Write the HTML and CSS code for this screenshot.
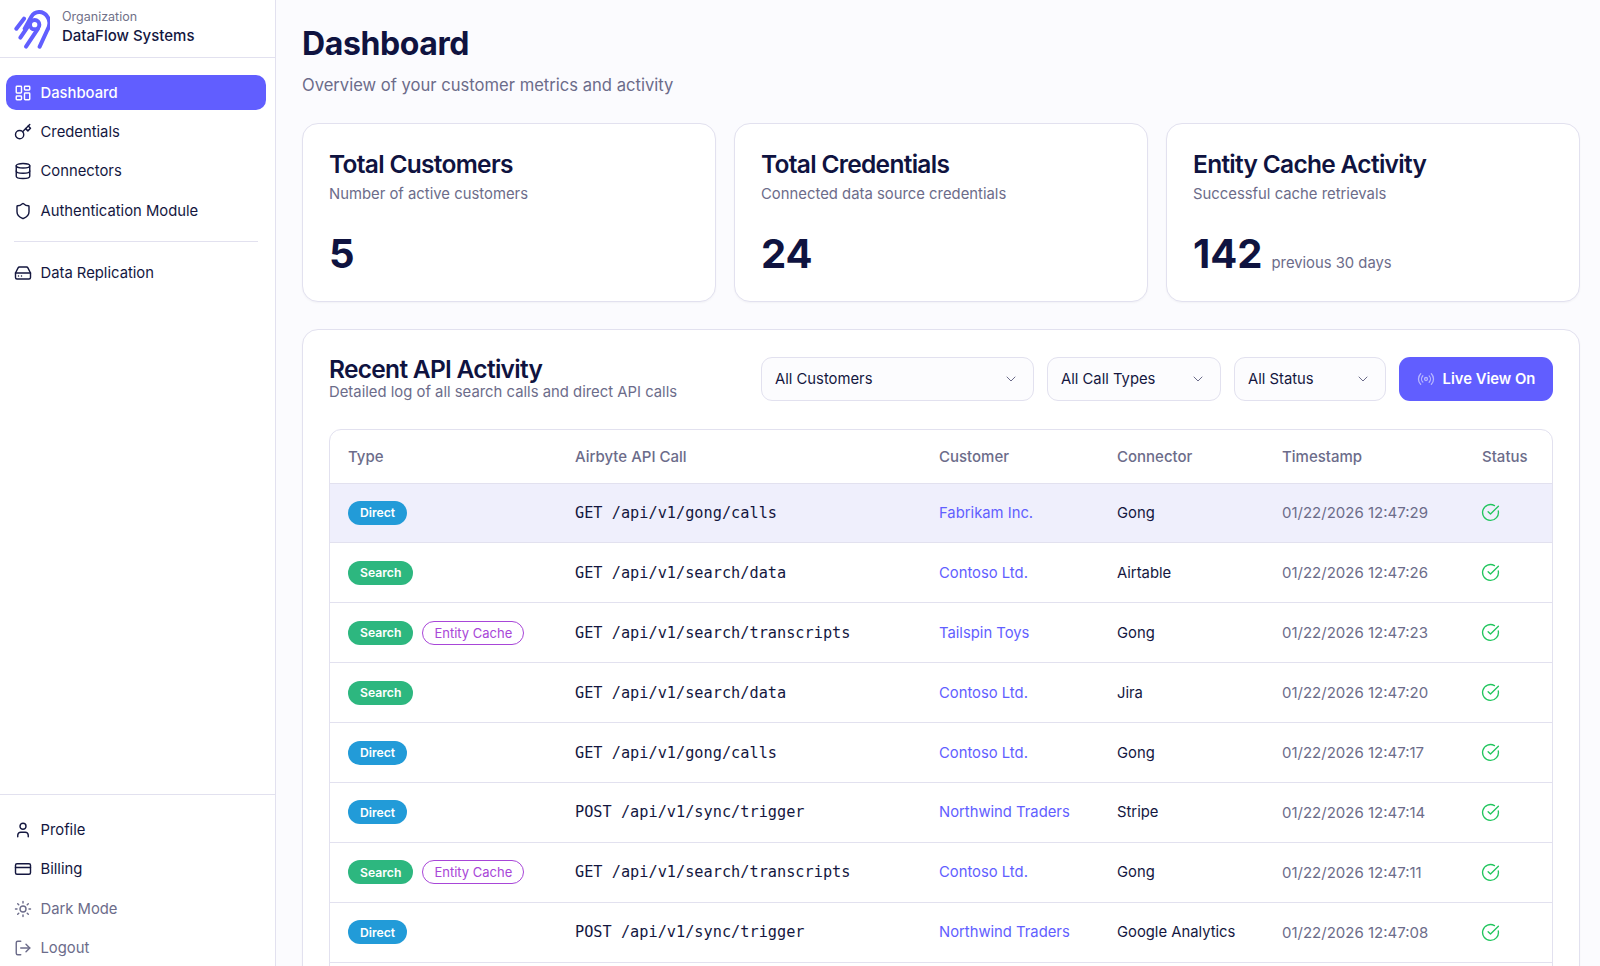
FILE: index.html
```html
<!DOCTYPE html>
<html lang="en">
<head>
<meta charset="utf-8">
<title>Dashboard</title>
<link rel="stylesheet" href="styles.css">
</head>
<body>
<svg class="defs" width="0" height="0" aria-hidden="true">
  <defs>
    <symbol id="i-grid" viewBox="0 0 24 24"><rect x="3" y="3" width="7" height="9" rx="1"/><rect x="14" y="3" width="7" height="5" rx="1"/><rect x="14" y="12" width="7" height="9" rx="1"/><rect x="3" y="16" width="7" height="5" rx="1"/></symbol>
    <symbol id="i-key" viewBox="0 0 24 24"><circle cx="7.5" cy="15.5" r="5.5"/><path d="m21 2-9.6 9.6"/><path d="m15.5 7.5 3 3L22 7l-3-3"/></symbol>
    <symbol id="i-db" viewBox="0 0 24 24"><ellipse cx="12" cy="5" rx="9" ry="3"/><path d="M3 5V19A9 3 0 0 0 21 19V5"/><path d="M3 12A9 3 0 0 0 21 12"/></symbol>
    <symbol id="i-shield" viewBox="0 0 24 24"><path d="M20 13c0 5-3.5 7.5-7.66 8.95a1 1 0 0 1-.67-.01C7.5 20.5 4 18 4 13V6a1 1 0 0 1 1-1c2 0 4.5-1.2 6.24-2.72a1.17 1.17 0 0 1 1.52 0C14.51 3.81 17 5 19 5a1 1 0 0 1 1 1z"/></symbol>
    <symbol id="i-drive" viewBox="0 0 24 24"><path d="M22 12H2"/><path d="M5.45 5.11 2 12v6a2 2 0 0 0 2 2h16a2 2 0 0 0 2-2v-6l-3.45-6.89A2 2 0 0 0 16.76 4H7.24a2 2 0 0 0-1.79 1.11z"/><path d="M6 16h.01"/><path d="M10 16h.01"/></symbol>
    <symbol id="i-user" viewBox="0 0 24 24"><path d="M19 21v-2a4 4 0 0 0-4-4H9a4 4 0 0 0-4 4v2"/><circle cx="12" cy="7" r="4"/></symbol>
    <symbol id="i-card" viewBox="0 0 24 24"><rect x="2" y="5" width="20" height="14" rx="2"/><path d="M2 10h20"/></symbol>
    <symbol id="i-sun" viewBox="0 0 24 24"><circle cx="12" cy="12" r="4"/><path d="M12 2v2M12 20v2M4.93 4.93l1.41 1.41M17.66 17.66l1.41 1.41M2 12h2M20 12h2M6.34 17.66l-1.41 1.41M19.07 4.93l-1.41 1.41"/></symbol>
    <symbol id="i-out" viewBox="0 0 24 24"><path d="M9 21H5a2 2 0 0 1-2-2V5a2 2 0 0 1 2-2h4"/><path d="m16 17 5-5-5-5"/><path d="M21 12H9"/></symbol>
    <symbol id="i-chev" viewBox="0 0 24 24"><path d="m6 9 6 6 6-6"/></symbol>
    <symbol id="i-check" viewBox="0 0 24 24"><path d="M21.801 10A10 10 0 1 1 17 3.335"/><path d="m9 11 3 3L22 4"/></symbol>
    <symbol id="i-radio" viewBox="0 0 24 24"><path d="M4.9 19.1C1 15.2 1 8.8 4.9 4.9"/><path d="M7.8 16.2c-2.3-2.3-2.3-6.1 0-8.5"/><circle cx="12" cy="12" r="2"/><path d="M16.2 7.8c2.3 2.3 2.3 6.1 0 8.5"/><path d="M19.1 4.9C23 8.8 23 15.1 19.1 19"/></symbol>
  </defs>
</svg>
<div class="app">
  <aside class="sidebar">
    <header class="org">
      <svg class="logo" viewBox="18 6 108 126" aria-hidden="true">
        <path d="M50 68 70 32C80 15 105 12 118 32 128 46 124 62 118 72L95 122"/>
        <path d="M25 68 48 38"/>
        <path d="M37 95 58 64"/>
        <path d="M54 122 90 68"/>
        <circle cx="80" cy="56" r="14"/>
      </svg>
      <div class="org-text">
        <div class="org-label">Organization</div>
        <div class="org-name">DataFlow Systems</div>
      </div>
    </header>
    <nav class="nav">
      <a class="nav-item active"><svg class="ico"><use href="#i-grid"/></svg>Dashboard</a>
      <a class="nav-item"><svg class="ico"><use href="#i-key"/></svg>Credentials</a>
      <a class="nav-item"><svg class="ico"><use href="#i-db"/></svg>Connectors</a>
      <a class="nav-item"><svg class="ico"><use href="#i-shield"/></svg>Authentication Module</a>
      <div class="nav-sep"></div>
      <a class="nav-item"><svg class="ico"><use href="#i-drive"/></svg>Data Replication</a>
    </nav>
    <div class="nav-bottom">
      <a class="nav-item"><svg class="ico"><use href="#i-user"/></svg>Profile</a>
      <a class="nav-item"><svg class="ico"><use href="#i-card"/></svg>Billing</a>
      <a class="nav-item muted"><svg class="ico"><use href="#i-sun"/></svg>Dark Mode</a>
      <a class="nav-item muted"><svg class="ico"><use href="#i-out"/></svg>Logout</a>
    </div>
  </aside>
  <main class="main">
    <h1 class="page-title">Dashboard</h1>
    <p class="page-sub">Overview of your customer metrics and activity</p>
    <section class="stats">
      <div class="card stat">
        <h2 class="stat-title">Total Customers</h2>
        <p class="stat-sub">Number of active customers</p>
        <div class="stat-row"><span class="stat-val">5</span></div>
      </div>
      <div class="card stat">
        <h2 class="stat-title">Total Credentials</h2>
        <p class="stat-sub">Connected data source credentials</p>
        <div class="stat-row"><span class="stat-val">24</span></div>
      </div>
      <div class="card stat">
        <h2 class="stat-title">Entity Cache Activity</h2>
        <p class="stat-sub">Successful cache retrievals</p>
        <div class="stat-row"><span class="stat-val">142</span><span class="stat-note">previous 30 days</span></div>
      </div>
    </section>
    <section class="card activity">
      <div class="activity-head">
        <div class="activity-titles">
          <h2 class="stat-title">Recent API Activity</h2>
          <p class="activity-sub">Detailed log of all search calls and direct API calls</p>
        </div>
        <div class="controls">
          <div class="select w-cust">All Customers<svg class="chev"><use href="#i-chev"/></svg></div>
          <div class="select w-type">All Call Types<svg class="chev"><use href="#i-chev"/></svg></div>
          <div class="select w-stat">All Status<svg class="chev"><use href="#i-chev"/></svg></div>
          <button class="live"><svg class="live-ico"><use href="#i-radio"/></svg>Live View On</button>
        </div>
      </div>
      <div class="table-wrap">
        <table class="table">
          <colgroup><col class="c1"><col class="c2"><col class="c3"><col class="c4"><col class="c5"><col class="c6"></colgroup>
          <thead>
            <tr><th>Type</th><th>Airbyte API Call</th><th>Customer</th><th>Connector</th><th>Timestamp</th><th>Status</th></tr>
          </thead>
          <tbody>
            <tr class="hl"><td><span class="pill direct">Direct</span></td><td class="mono">GET /api/v1/gong/calls</td><td class="cust">Fabrikam Inc.</td><td>Gong</td><td class="ts">01/22/2026 12:47:29</td><td><svg class="ok"><use href="#i-check"/></svg></td></tr>
            <tr><td><span class="pill search">Search</span></td><td class="mono">GET /api/v1/search/data</td><td class="cust">Contoso Ltd.</td><td>Airtable</td><td class="ts">01/22/2026 12:47:26</td><td><svg class="ok"><use href="#i-check"/></svg></td></tr>
            <tr><td><span class="pill search">Search</span><span class="pill entity">Entity Cache</span></td><td class="mono">GET /api/v1/search/transcripts</td><td class="cust">Tailspin Toys</td><td>Gong</td><td class="ts">01/22/2026 12:47:23</td><td><svg class="ok"><use href="#i-check"/></svg></td></tr>
            <tr><td><span class="pill search">Search</span></td><td class="mono">GET /api/v1/search/data</td><td class="cust">Contoso Ltd.</td><td>Jira</td><td class="ts">01/22/2026 12:47:20</td><td><svg class="ok"><use href="#i-check"/></svg></td></tr>
            <tr><td><span class="pill direct">Direct</span></td><td class="mono">GET /api/v1/gong/calls</td><td class="cust">Contoso Ltd.</td><td>Gong</td><td class="ts">01/22/2026 12:47:17</td><td><svg class="ok"><use href="#i-check"/></svg></td></tr>
            <tr><td><span class="pill direct">Direct</span></td><td class="mono">POST /api/v1/sync/trigger</td><td class="cust">Northwind Traders</td><td>Stripe</td><td class="ts">01/22/2026 12:47:14</td><td><svg class="ok"><use href="#i-check"/></svg></td></tr>
            <tr><td><span class="pill search">Search</span><span class="pill entity">Entity Cache</span></td><td class="mono">GET /api/v1/search/transcripts</td><td class="cust">Contoso Ltd.</td><td>Gong</td><td class="ts">01/22/2026 12:47:11</td><td><svg class="ok"><use href="#i-check"/></svg></td></tr>
            <tr><td><span class="pill direct">Direct</span></td><td class="mono">POST /api/v1/sync/trigger</td><td class="cust">Northwind Traders</td><td>Google Analytics</td><td class="ts">01/22/2026 12:47:08</td><td><svg class="ok"><use href="#i-check"/></svg></td></tr>
            <tr><td></td><td></td><td></td><td></td><td></td><td></td></tr>
          </tbody>
        </table>
      </div>
    </section>
  </main>
</div>
</body>
</html>
```
FILE: styles.css
```css
* { box-sizing: border-box; }
html, body { margin: 0; height: 100%; overflow: hidden; }
body { font-family: Inter, "Liberation Sans", sans-serif; font-size: 14.8px; color: #0f1340; background: #fbfbfe; }
h1, h2, p { margin: 0; }
.defs { position: absolute; }
.app { display: flex; height: 966px; }

.sidebar { width: 276px; flex: none; background: #fff; border-right: 1px solid #e2e1ef; display: flex; flex-direction: column; }
.org { height: 58px; border-bottom: 1px solid #e2e1ef; display: flex; align-items: center; gap: 12px; padding: 0 13px 0 14px; }
.logo { width: 36px; height: 42px; flex: none; fill: none; stroke: #615eff; stroke-width: 12; stroke-linecap: round; stroke-linejoin: round; }
.org-text { padding-bottom: 4px; }
.org-label { font-size: 12.5px; line-height: 18px; color: #717188; }
.org-name { font-size: 15px; font-weight: 500; line-height: 20px; color: #14173f; }
.nav { flex: 1; padding: 17px 9px 0 6px; display: flex; flex-direction: column; gap: 4px; }
.nav-item { height: 35.3px; display: flex; align-items: center; gap: 9px; padding: 0 7.5px; border-radius: 10px; font-size: 14.8px; color: #14173f; }
.nav-item.active { background: #615eff; color: #fff; font-weight: 500; }
.nav-item.muted { color: #6c6c8a; }
.nav-sep { height: 1px; background: #e2e1ef; margin: 9px 8px; }
.nav-bottom { border-top: 1px solid #e2e1ef; padding: 17.5px 9px 0 6px; display: flex; flex-direction: column; gap: 4px; height: 172px; flex: none; }
.ico { width: 18px; height: 18px; flex: none; fill: none; stroke: currentColor; stroke-width: 1.9; stroke-linecap: round; stroke-linejoin: round; }

.main { flex: 1; min-width: 0; padding: 25px 20px 0 26px; overflow: hidden; }
.page-title { font-size: 32px; font-weight: 700; line-height: 38px; letter-spacing: -0.4px; color: #0f1340; }
.page-sub { font-size: 16.6px; line-height: 24px; margin-top: 10px; color: #6c6c8a; }
.stats { display: grid; grid-template-columns: repeat(3, 1fr); gap: 18px; margin-top: 26px; }
.card { background: #fff; border: 1px solid #e2e1ef; border-radius: 16px; box-shadow: 0 1px 2px rgba(20, 20, 60, 0.04); }
.stat { height: 179px; padding: 26px 26px 0; }
.stat-title { font-size: 24.5px; font-weight: 600; line-height: 29px; letter-spacing: -0.7px; color: #0f1340; }
.stat-sub { font-size: 14.85px; line-height: 20px; margin-top: 5px; color: #6c6c8a; }
.stat-row { display: flex; align-items: baseline; gap: 9px; margin-top: 26px; }
.stat-val { font-size: 40px; font-weight: 700; line-height: 48px; color: #0f1340; }
.stat-note { font-size: 14.8px; color: #6c6c8a; }

.activity { margin-top: 27px; padding: 27px 26px 0; height: 700px; }
.activity-head { display: flex; justify-content: space-between; align-items: center; height: 44px; }
.activity-titles .stat-title { line-height: 24px; }
.activity-sub { font-size: 14.85px; line-height: 20px; margin-top: 1px; color: #6c6c8a; }
.controls { display: flex; gap: 13px; }
.select { height: 44px; background: #fcfcfe; border: 1px solid #e2e1ef; border-radius: 11px; display: flex; align-items: center; justify-content: space-between; padding: 0 14px 0 13px; font-size: 14.8px; color: #14173f; }
.w-cust { width: 273px; }
.w-type { width: 174px; }
.w-stat { width: 152px; }
.chev { width: 16px; height: 16px; fill: none; stroke: #6c6c8a; stroke-width: 1.5; stroke-linecap: round; stroke-linejoin: round; }
.live { height: 44px; width: 154px; background: #615eff; color: #fff; border: 0; border-radius: 11px; font: 600 14.8px Inter, sans-serif; display: flex; align-items: center; justify-content: center; gap: 8px; padding: 0; }
.live-ico { width: 18px; height: 18px; fill: none; stroke: #b7b6ff; stroke-width: 1.7; stroke-linecap: round; stroke-linejoin: round; }

.table-wrap { margin-top: 28px; border: 1px solid #e2e1ef; border-radius: 12px; overflow: hidden; }
.table { width: 100%; border-collapse: collapse; table-layout: fixed; font-size: 14.8px; }
.c1 { width: 227px; }
.c2 { width: 364px; }
.c3 { width: 178px; }
.c4 { width: 165px; }
.c5 { width: 200px; }
.table th { height: 53px; padding: 0 0 0 18px; text-align: left; font-size: 15px; font-weight: 500; color: #6c6c8a; border-bottom: 1px solid #e2e1ef; }
.table td { height: 59.9px; padding: 0 0 0 18px; border-bottom: 1px solid #e2e1ef; color: #14173f; white-space: nowrap; }
.table tr.hl td { background: #efeffc; }
.table td.mono { font-family: "DejaVu Sans Mono", "Liberation Mono", monospace; font-size: 15.25px; color: #14173f; }
.table td.cust { color: #615eff; }
.table td.ts { font-size: 15px; color: #6c6c8a; }
.pill { display: inline-flex; align-items: center; height: 24px; padding: 0 12px; border-radius: 12px; font-size: 12.2px; font-weight: 600; color: #fff; vertical-align: middle; }
.pill.direct { background: #229bd8; }
.pill.search { background: #2db77f; }
.pill.entity { background: #fff; color: #a846d8; border: 1px solid #a846d8; font-weight: 400; font-size: 13px; padding: 0 11px; margin-left: 9px; }
.ok { width: 19px; height: 19px; margin-left: -1px; display: block; fill: none; stroke: #22c55e; stroke-width: 1.7; stroke-linecap: round; stroke-linejoin: round; }
```
